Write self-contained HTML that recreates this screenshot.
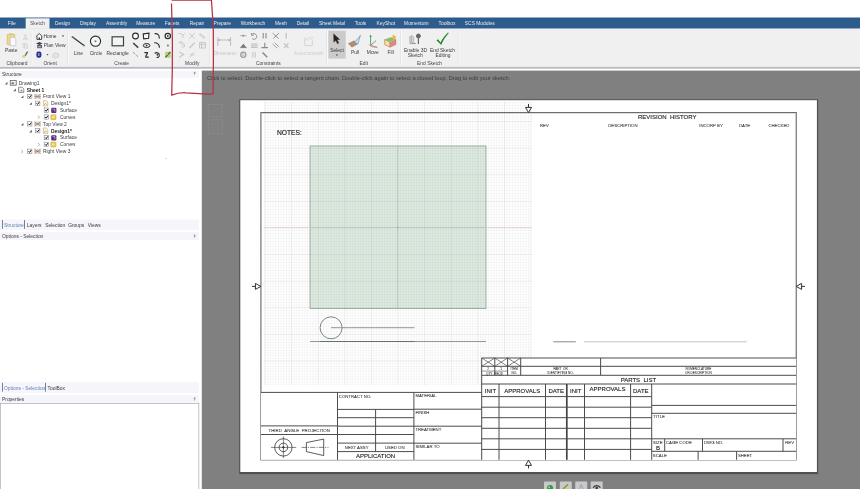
<!DOCTYPE html>
<html><head><meta charset="utf-8">
<style>
html,body{margin:0;padding:0;background:#fff;overflow:hidden}
body{width:860px;height:489px;position:relative;font-family:"Liberation Sans",sans-serif}
svg{position:absolute;left:-6px;top:-6px;display:block;filter:blur(.35px)}
text{font-family:"Liberation Sans",sans-serif}
.ui{font-size:4.9px;fill:#3a3a3a}
.tab{font-size:4.9px;fill:#e8eef5}
.lbl{font-size:4.9px;fill:#444}
.dis{font-size:4.9px;fill:#b4b4b4}
.dr{font-size:4.3px;fill:#333;stroke:#333;stroke-width:.05}
.drm{font-size:6px;fill:#222;stroke:#222;stroke-width:.12}
.ln{stroke:#4c4c4c;stroke-width:1;fill:none}
</style></head><body>
<svg width="872" height="501" viewBox="-6 -6 872 501">
<defs>
<pattern id="gmin" width="2.66" height="2.66" patternUnits="userSpaceOnUse" x="397.6" y="227.5">
<path d="M0 0H2.66M0 0V2.66" stroke="#101040" stroke-opacity=".11" stroke-width=".55" fill="none"/>
</pattern>
<pattern id="gmaj" width="26.6" height="26.6" patternUnits="userSpaceOnUse" x="397.6" y="227.5">
<path d="M0 0H26.6M0 0V26.6" stroke="#101040" stroke-opacity=".15" stroke-width=".7" fill="none"/>
</pattern>
<clipPath id="sheetclip"><rect x="240" y="101" width="577" height="371"/></clipPath>
</defs>

<!-- ===== base chrome ===== -->
<rect x="-6" y="-6" width="872" height="501" fill="#fff"/>
<rect x="-6" y="17.5" width="872" height="11.2" fill="#2c5b8c"/>
<rect x="-6" y="28.7" width="872" height="38.5" fill="#f0f0f0"/>
<rect x="-6" y="66.900" width="872" height="1.800" fill="#b6bcc4"/>
<!-- viewport -->
<rect x="201.800" y="70.600" width="664.200" height="424.400" fill="#808080"/>

<!-- tabs -->
<rect x="25.7" y="18.3" width="23.8" height="10.6" fill="#f0f0f0"/>
<g class="tab" text-anchor="middle">
<text x="11.8" y="24.9">File</text>
<text x="37.6" y="24.9" style="fill:#555">Sketch</text>
<text x="62.7" y="24.9">Design</text>
<text x="88" y="24.9">Display</text>
<text x="116.5" y="24.9">Assembly</text>
<text x="145.7" y="24.9">Measure</text>
<text x="172.2" y="24.9">Facets</text>
<text x="197" y="24.9">Repair</text>
<text x="222.2" y="24.9">Prepare</text>
<text x="253" y="24.9">Workbench</text>
<text x="281" y="24.9">Mesh</text>
<text x="303" y="24.9">Detail</text>
<text x="332" y="24.9">Sheet Metal</text>
<text x="360.5" y="24.9">Tools</text>
<text x="385.8" y="24.9">KeyShot</text>
<text x="416.3" y="24.9">Momentum</text>
<text x="447" y="24.9">Toolbox</text>
<text x="479.8" y="24.9">SCS Modules</text>
</g>

<!-- ribbon -->
<g stroke="#e0e0e0" stroke-width=".8">
<path d="M31.2 31V65M67.5 31V65M209.5 31V65M326.7 31V65M400.5 31V65M458.3 31V65"/>
</g>
<g stroke="#fbfbfb" stroke-width=".8">
<path d="M32 31V65M68.3 31V65M210.3 31V65M327.5 31V65M401.3 31V65M459.1 31V65"/>
</g>
<!-- group labels -->
<g class="lbl" text-anchor="middle">
<text x="17" y="64.9">Clipboard</text>
<text x="50.2" y="64.9">Orient</text>
<text x="121.6" y="64.9">Create</text>
<text x="192.3" y="64.9">Modify</text>
<text x="268.4" y="64.9">Constraints</text>
<text x="363.8" y="64.9">Edit</text>
<text x="429.6" y="64.9">End Sketch</text>
</g>
<!-- clipboard -->
<g>
<rect x="7.2" y="34.2" width="7.6" height="10.6" rx="1" fill="#ecd98f" stroke="#cdb25a" stroke-width=".6"/>
<rect x="9.3" y="33.2" width="3.4" height="2" rx=".6" fill="#d9c77f"/>
<path d="M10.2 37.5h4l1.6 1.6v6.6h-5.6z" fill="#fbfbff" stroke="#b9b4cf" stroke-width=".6"/>
<text class="ui" x="11.2" y="51.9" text-anchor="middle">Paste</text>
<g stroke="#d4d4d4" stroke-width=".9" fill="none">
<path d="M24 34.2l2.2 4.6M26.6 34.2l-2.2 4.6"/><circle cx="24" cy="39" r=".8"/><circle cx="26.7" cy="39" r=".8"/>
<rect x="23" y="43.6" width="3" height="3.6"/><rect x="24.6" y="44.8" width="3" height="3.4" fill="#ececec"/>
</g>
<path d="M27.6 51.6l-2.6 4.2" stroke="#6b6446" stroke-width="1.3"/>
<path d="M22.6 55l2.6 .6l-.6 2.4l-2.6 -.8z" fill="#e1cf7c"/>
</g>
<!-- orient -->
<g>
<path d="M36 36.6l3.2-3l3.2 3M37 36.4v3h4.6v-3" fill="#fff" stroke="#333" stroke-width=".9"/>
<rect x="38.6" y="37.4" width="1.3" height="2" fill="#333"/>
<text class="ui" x="43.4" y="37.8">Home</text>
<path d="M61.9 35.6h2.2l-1.1 1.4z" fill="#333"/>
<path d="M36 43.6l3.3-1.5l3.3 1.5l-3.3 1.3z" fill="#3c4048"/>
<rect x="37.2" y="45" width="4.8" height="3.2" fill="#555b66"/><rect x="38.2" y="46" width="2.8" height="1.4" fill="#aab"/>
<text class="ui" x="43.8" y="47.3">Plan View</text>
<rect x="36.4" y="51.4" width="5" height="6.4" rx="2" fill="#2a2f8f"/><rect x="38.2" y="53" width="1.2" height="3" fill="#9fb0ff"/>
<path d="M46.4 54.2h2.2l-1.1 1.4z" fill="#333"/>
<path d="M52.4 55l3-2.4l3.4 1.2v3l-3.4 1.2l-3-1z" fill="#e3e3e3" stroke="#c6c6c6" stroke-width=".6"/>
</g>
<!-- create big -->
<g>
<path d="M72.5 36.9L84 45.5" stroke="#2f3236" stroke-width="1.2"/>
<circle cx="72.5" cy="36.9" r="1" fill="#4d8c84"/><circle cx="84" cy="45.5" r="1" fill="#4d8c84"/>
<text class="ui" x="78.4" y="54.8" text-anchor="middle">Line</text>
<circle cx="95.5" cy="41.2" r="5.1" fill="#f6f6f6" stroke="#26292c" stroke-width="1.1"/>
<circle cx="95.5" cy="41.2" r="1" fill="#4d8c84"/><circle cx="98.3" cy="36.6" r=".9" fill="#4d8c84"/>
<text class="ui" x="96" y="54.8" text-anchor="middle">Circle</text>
<rect x="112.1" y="36.8" width="11.4" height="9" fill="#f4f4f4" stroke="#3a4444" stroke-width="1.2"/>
<text class="ui" x="117.6" y="54.8" text-anchor="middle">Rectangle</text>
</g>
<!-- create small -->
<g fill="none" stroke="#2b2b2b" stroke-width="1">
<circle cx="135.5" cy="36" r="2.9" fill="#f8f8f8" stroke-width="1.1"/>
<path d="M143.2 33.9l5.8-.8l-.4 5.2l-4.9.5z" fill="#f8f8f8" stroke-width="1.1"/>
<path d="M154.6 33.6c3.6-.2 5 1.6 4.6 5" stroke-width="1.1"/>
<circle cx="167.8" cy="36" r="2.7" stroke-width="1.2" fill="#f4f4f4"/><circle cx="167.8" cy="36" r=".5" fill="#2b2b2b"/>
<path d="M133.2 43l5 4.6" stroke="#444" stroke-width="1.6"/>
<ellipse cx="146.6" cy="45.5" rx="3.3" ry="2" stroke-width="1"/><circle cx="146.6" cy="45.5" r=".5" fill="#2b2b2b"/>
<path d="M154.2 42.8c3.4 0 5.2 1.8 5.2 5" stroke-width="1.1"/>
<circle cx="167.9" cy="45.4" r="1" fill="#4f8a62" stroke="none"/>
<path d="M133 52.2l5.4 4.8" stroke="#666" stroke-width=".9" stroke-dasharray="1 .9"/>
<path d="M144.4 52.6h3c.6 2-2.6 2.8-1.6 4.6h3" stroke-width="1.2"/>
<path d="M154.6 53.4c2.4-1.8 5.4 0 4.6 2.6c-.6 1.6-2 1.600-2.600 1.2" stroke-width="1.1"/><circle cx="157.300" cy="54.8" r=".5" fill="#2b2b2b"/>
<rect x="165.200" y="51.8" width="5.400" height="5.800" fill="#b9c96a" stroke="none"/><path d="M165.400 57.400l5-5.400" stroke="#3f7a3a" stroke-width="1.300"/><path d="M165.600 52.400l4.800 5" stroke="#d6dc8c" stroke-width=".8"/>
</g>
<!-- modify (disabled) -->
<g fill="none" stroke="#c4c4c4" stroke-width=".9">
<path d="M178.600 33.400c3 0 4.400 1.200 4.400 4.600M182.800 35.200l2-1.800"/>
<path d="M189.400 33.400l5.400 5M194.800 33.200l-5.600 5.400"/>
<path d="M200.200 33.600l4.800 3.800l-.8 1l-4.800-3.800z"/>
<path d="M178.400 42.400c3 .4 4.600 2.200 4.600 5.400M180 41.600c3 .4 4.600 2.200 4.600 5.400"/>
<path d="M189.400 48l5.400-5.400" stroke-width="1.300"/>
<rect x="199.600" y="42.600" width="5.800" height="5.400"/><path d="M201.600 42.600v5.400M199.600 44.600h5.800"/>
<path d="M179.600 52l4 2.400l-4.400 2.800" stroke-width="1.100"/>
<path d="M189.600 57.200l5-5.200M190 54.200l4.400 1"/>
</g>
<!-- dimension -->
<g fill="none" stroke="#b9b9b9" stroke-width=".9">
<path d="M217.800 37v8.800M230.600 37v8.800M217.800 40h12.800"/>
<path d="M217.800 40l2-1.200v2.400zM230.600 40l-2-1.200v2.400z" fill="#9bb0c8" stroke="none"/>
</g>
<text class="dis" x="225.300" y="54.900" text-anchor="middle" style="fill:#c6c6c6">Dimension</text>
<!-- constraints -->
<g fill="none" stroke="#a9a9a9" stroke-width=".9">
<path d="M240.200 35.700h6.400"/><circle cx="243.300" cy="35.700" r=".9" fill="#888" stroke="none"/>
<path d="M251.600 34c3.600-1.600 6.400 1.600 4.600 4.200c-1.200 1.400-3 1.400-4 .4M251.200 33.200l.6 2.400l2.200-.8" stroke="#8a8a8a"/>
<path d="M263.200 33v5.600M266 33v5.600" stroke="#8a8a8a" stroke-width="1.100"/>
<path d="M272.600 33.200l6 5.400M279 33l-5.800 5.600" stroke="#8a8a8a"/>
<path d="M286.200 33v5.400" stroke="#c4c4c4" stroke-width="1.400"/>
<path d="M240.600 47.200h5.600l-2.800-3.400z" fill="#777" stroke="none"/><path d="M240.200 47.600h6.400" stroke="#777"/>
<path d="M251 44h6.600M251 45.800h6.600M251 47.400h6.600" stroke="#b4b4b4"/>
<path d="M261.400 47.600h6.600M264.800 42.800v4.800" stroke="#8a8a8a" stroke-width="1.100"/>
<path d="M272.600 44l4.600 4.200M274.600 42.800l4.600 4.200" stroke="#9a9a9a"/>
<path d="M284 43.400l4.400 4.400M288.400 43.400l-4.400 4.400" stroke="#c0c0c0" stroke-width="1.200"/>
<circle cx="243.300" cy="54.700" r="2.600" stroke="#9a9a9a" stroke-width="1.200"/><circle cx="243.300" cy="54.700" r="1" stroke="#b4b4b4"/>
<path d="M252.800 52v5.800M255.200 52v5.800" stroke="#c0c0c0"/>
<path d="M262.600 52.400l4.600 4.800" stroke="#8a8a8a" stroke-width="1.500"/>
</g>
<!-- autoconstrain -->
<g fill="none" stroke="#d2d2d2" stroke-width=".9">
<path d="M304.800 45.600v-7.800l2.800 2.400l2-3.200l2.800 3.200v5.400z"/><path d="M311.400 36.600l2 1.600"/>
</g>
<text class="dis" x="308.600" y="55" text-anchor="middle" style="fill:#cdcdcd">Autoconstrain</text>
<!-- select -->
<rect x="328.300" y="30.700" width="17.400" height="27.900" fill="#cbcbcb"/>
<path d="M333.600 33.800l.2 8.400l2-1.800l1.600 3.400l1.400-.7l-1.600-3.300l2.600-.2z" fill="#2a2018" stroke="#4a3a2c" stroke-width=".4"/>
<text class="ui" x="337.100" y="52" text-anchor="middle">Select</text>
<path d="M335.800 54.600h2.200l-1.100 1.300z" fill="#333"/>
<!-- pull -->
<path d="M348.400 43.600l5.800-2.800l3.200 3.400l-5.600 3z" fill="#b98a68" stroke="#8a6a52" stroke-width=".4"/>
<path d="M354.400 42.600l6-7.200l-2.400 8.400z" fill="#cfe2f2" stroke="#5d86a8" stroke-width=".6"/>
<text class="ui" x="355" y="54.400" text-anchor="middle">Pull</text>
<!-- move -->
<g fill="none" stroke-width=".9">
<path d="M370.600 45.400v-10" stroke="#4c9a78"/><path d="M369.400 37l1.200-2.400l1.200 2.400z" fill="#4c9a78" stroke="none"/>
<path d="M370.600 45.400l5.400-4.800" stroke="#5aa36a"/>
<path d="M370.600 45.400l6.600 2.200" stroke="#b46a6a"/>
<path d="M368.800 44.400c2.400 3 6 3.400 8.400 2" stroke="#c08a8a" stroke-width=".6"/>
</g>
<text class="ui" x="372.800" y="54.400" text-anchor="middle">Move</text>
<!-- fill -->
<path d="M384.600 39.600l6-2.400l5.400 2l-6 2.600z" fill="#7cc46a"/>
<path d="M384.600 39.600v5l5.400 2.600v-5z" fill="#f1e39a" stroke="#c96a5a" stroke-width=".6"/>
<path d="M390 42.200l6-2.600v5l-6 2.600z" fill="#d88a84" stroke="#c96a5a" stroke-width=".4"/>
<path d="M393.600 34.600l1 1.600l1.800-.4l-1 1.600l1 1.400l-1.800-.2l-1 1.600l-.6-1.800l-1.800-.4l1.600-1l-.2-1.800z" fill="#f2b33a"/>
<text class="ui" x="390.600" y="54.400" text-anchor="middle">Fill</text>
<!-- enable 3d sketch -->
<g fill="none" stroke="#8a8a8a" stroke-width=".8">
<path d="M410 36v7.600h5.600M411.800 35v7.400l4 1.200" /><path d="M413.600 36.400v5.400" stroke="#aaa"/>
<circle cx="418.400" cy="36" r="2" fill="#6a6a6a" stroke="#5a5a5a"/><path d="M418.400 38v6" stroke="#5a5a5a" stroke-width="1.100"/>
</g>
<text class="ui" x="415.500" y="51.700" text-anchor="middle">Enable 3D</text>
<text class="ui" x="415.200" y="57.300" text-anchor="middle">Sketch</text>
<!-- end sketch -->
<path d="M436.400 40.200l1.600-1l2.600 3.200c2-3.800 4.400-7 7.400-9.800l.8.400c-3 3.400-5.800 7.600-7.600 12z" fill="#1f8a2c"/>
<text class="ui" x="442.500" y="51.700" text-anchor="middle">End Sketch</text>
<text class="ui" x="443" y="57.300" text-anchor="middle">Editing</text>

<!-- left panel -->
<rect x="0" y="70.800" width="199" height="7" fill="#f5f5fb"/>
<text class="ui" x="2" y="75.600">Structure</text>
<!-- tree -->
<g class="ui">
<g fill="#555"><path d="M5 84.400l2.400-2.600v2.600zM13.400 91.200l2.400-2.600v2.600zM21 98l2.400-2.600v2.600zM29.400 104.800l2.400-2.600v2.600zM21 125.600l2.400-2.600v2.600zM29.400 132.400l2.400-2.600v2.600z"/></g>
<g fill="none" stroke="#777" stroke-width=".6"><path d="M38 115.600l1.600 1.600l-1.600 1.600M38 143l1.600 1.600l-1.600 1.600M21.400 150l1.600 1.600l-1.600 1.600"/></g>
<!-- row icons -->
<rect x="10.200" y="80.400" width="6" height="4.800" fill="#f2f2f2" stroke="#555" stroke-width=".7"/><rect x="11.600" y="82.400" width="2.200" height="1.800" fill="#666"/>
<text x="18.800" y="84.700">Drawing1</text>
<path d="M18.600 87.200h3.600l1.600 1.600v3.600h-5.200z" fill="#f4f4f4" stroke="#666" stroke-width=".7"/><path d="M20 91.200l1.400-1.600l1.400 1.600z" fill="#888"/>
<text x="26.800" y="91.500" style="font-weight:bold;fill:#222">Sheet 1</text>
<!-- checkbox + view rows -->
<g id="cb1"><rect x="27.600" y="94.300" width="4.300" height="4.300" fill="#fff" stroke="#8a8a94" stroke-width=".6"/><path d="M28.500 96.400l1.100 1.200l1.700-2.400" fill="none" stroke="#111" stroke-width="1"/></g>
<g id="vi1"><rect x="34.200" y="94" width="6.600" height="5" fill="#e9d9cf"/><path d="M34.400 94.200l6.200 4.600M40.600 94.200l-6.200 4.600M34.200 96.500h6.600" stroke="#8a7466" stroke-width=".6"/></g>
<text x="43" y="98.300">Front View 1</text>
<use href="#cb1" x="8" y="6.850"/>
<g id="de1"><path d="M43.400 100.600h3l1.400 1.400v4h-4.400z" fill="#fdf6e6" stroke="#b9a27a" stroke-width=".6"/><path d="M44.200 105.200l1.200-1.800l1.400 1.200" fill="none" stroke="#c48a3a" stroke-width=".7"/></g>
<text x="51" y="105.200">Design1*</text>
<use href="#cb1" x="16.600" y="13.700"/>
<g id="su1"><rect x="51.200" y="107.800" width="5.200" height="5.200" rx="1" fill="#5a2f7a"/><path d="M52.600 109.200h2.200v2.400" stroke="#d9c2ea" stroke-width=".7" fill="none"/></g>
<text x="60" y="112">Surface</text>
<use href="#cb1" x="16.600" y="20.550"/>
<g id="cu1"><rect x="50.800" y="114.700" width="5.200" height="5" rx=".8" fill="#e9c85a" stroke="#c9a83a" stroke-width=".5"/><rect x="52.200" y="116" width="2.200" height="2" fill="#f6e7a6"/></g>
<text x="60" y="118.900">Curves</text>
<use href="#cb1" x="0" y="27.400"/><use href="#vi1" x="0" y="27.400"/>
<text x="43" y="125.700">Top View 2</text>
<use href="#cb1" x="8" y="34.250"/><use href="#de1" x="0" y="27.400"/>
<text x="51" y="132.600" style="font-weight:bold;fill:#222">Design1*</text>
<use href="#cb1" x="16.600" y="41.100"/><use href="#su1" x="0" y="27.400"/>
<text x="60" y="139.400">Surface</text>
<use href="#cb1" x="16.600" y="47.950"/><use href="#cu1" x="0" y="27.400"/>
<text x="60" y="146.300" style="font-style:italic">Curves</text>
<use href="#cb1" x="0" y="54.800"/><use href="#vi1" x="0" y="54.800"/>
<text x="43" y="153.100">Right View 3</text>
</g>
<rect x="165.600" y="158" width=".8" height=".8" fill="#999"/>
<!-- tabs row -->
<rect x="0" y="219.600" width="199" height="10.400" fill="#f5f5fb"/>
<path d="M2.500 220v8.800M24.500 220v8.800" stroke="#3a4a66" stroke-width=".7"/>
<g class="ui">
<text x="4" y="226.700" style="fill:#5d85b4">Structure</text>
<text x="26.800" y="226.700">Layers</text>
<text x="45.200" y="226.700">Selection</text>
<text x="68.200" y="226.700">Groups</text>
<text x="87.800" y="226.700">Views</text>
</g>
<rect x="0" y="232.200" width="199" height="7.800" fill="#f5f5fb"/>
<text class="ui" x="2" y="238">Options - Selection</text>
<!-- bottom tabs -->
<rect x="0" y="382" width="199" height="11" fill="#f5f5fb"/>
<path d="M2.500 382.800v8.800M45.500 382.800v8.800" stroke="#3a4a66" stroke-width=".7"/>
<g class="ui">
<text x="4" y="389.500" style="fill:#5d85b4">Options - Selection</text>
<text x="47.500" y="389.500">ToolBox</text>
</g>
<rect x="0" y="395.200" width="199" height="8" fill="#f5f5fb"/>
<text class="ui" x="2" y="401">Properties</text>
<rect x=".4" y="403.400" width="198.400" height="90" fill="#fff" stroke="#b4b4bc" stroke-width=".8"/>
<g fill="#9a9aa6"><rect x="193.800" y="71.800" width="1.600" height="2.200"/><rect x="194.400" y="74" width=".5" height="1.400"/>
<rect x="193.800" y="234.600" width="1.600" height="2.200"/><rect x="194.400" y="236.800" width=".5" height="1.400"/>
<rect x="193.800" y="397.400" width="1.600" height="2.200"/><rect x="194.400" y="399.600" width=".5" height="1.400"/></g>

<!-- hint text -->
<text x="207.100" y="79.900" style="font-size:5.660px;fill:#3c3c3c">Click to select. Double-click to select a tangent chain. Double-click again to select a closed loop. Drag to edit your sketch.</text>
<!-- faint viewport mini buttons -->
<g fill="none" stroke="#8b8b8b" stroke-width=".7"><rect x="208.200" y="104.400" width="14" height="12.600"/><rect x="208.200" y="119.800" width="14" height="14"/>
<path d="M212 113l6-5M211.600 124h6.600v6.600h-6.600z" stroke="#898989"/></g>
<!-- sheet -->
<rect x="239.200" y="99.300" width="579" height="374.800" fill="#505050"/>
<rect x="240.300" y="100.200" width="576.600" height="371.800" fill="#fff"/>
<!-- green face -->
<rect x="310" y="146" width="176" height="162.400" fill="#ddeadf" stroke="#8fa293" stroke-width=".8"/>
<g clip-path="url(#sheetclip)">
<rect x="263.600" y="100" width="268" height="285.200" fill="url(#gmin)"/>
<rect x="263.600" y="100" width="268" height="285.200" fill="url(#gmaj)"/>
</g>
<g clip-path="url(#greenclip)"></g>
<path d="M263.600 227.500H531.600" stroke="#e3cfd6" stroke-width=".8"/>

<path d="M310 227.500H486" stroke="#b4c2b7" stroke-width=".7"/>
<path d="M397.600 146V308.400" stroke="#b4c2b7" stroke-width=".7"/><circle cx="397.600" cy="227.500" r=".8" fill="#9aa89d"/>
<!-- sketch curves -->
<circle cx="331.100" cy="327.800" r="11" fill="none" stroke="#6f7a72" stroke-width=".9"/>
<path d="M331 327.700H414.600M310.200 341.500H486" stroke="#8f9a92" stroke-width="1"/>
<path d="M320 341.500H414.600" stroke="#66756a" stroke-width="1"/>
<path d="M553.400 341.800H575.800" stroke="#7d8f80" stroke-width="1"/>
<path d="M584 341.800H746.800" stroke="#bdbdbd" stroke-width=".9"/>
<!-- frame -->
<path d="M260.400 112.700H796.800" class="ln"/><path d="M260.400 459.900H796.800" class="ln" style="stroke:#5c5c5c"/>
<path d="M260.900 112.700V459.900M796.300 112.700V459.900" class="ln" style="stroke:#858585;stroke-width:1.400"/>
<!-- centre marks -->
<g class="ln" stroke-width=".8" style="stroke:#333">
<path d="M528.500 104v3.400M525.500 107.400h6l-3 5.200z" fill="#fff"/>
<path d="M528.500 468.400v-3M525.500 465.400h6l-3-5.200z" fill="#fff"/>
<path d="M252 286.400h3.400M255.400 283.400v6l5.400-3z" fill="#fff"/>
<path d="M805 286.400h-3.400M801.600 283.400v6l-5.400-3z" fill="#fff"/>
</g>
<!-- revision block text -->
<text class="drm" x="638" y="119">REVISION&#160;&#160;HISTORY</text>
<g class="dr">
<text x="540" y="127">REV</text>
<text x="608.200" y="127">DESCRIPTION</text>
<text x="699.200" y="127">INCORP BY</text>
<text x="739" y="127">DATE</text>
<text x="768.400" y="127">CHECKED</text>
</g>
<text x="277" y="134.600" style="font-size:6.700px;fill:#1c1c1c;stroke:#1c1c1c;stroke-width:.15">NOTES:</text>
<!-- title block -->
<rect x="481.700" y="358" width="314.500" height="102" fill="#fff"/>
<rect x="261" y="392.300" width="221" height="67.500" fill="#fff"/>
<g class="ln">
<path d="M261 392.400H481.700"/>
<path d="M337.500 392.400V459.800M413.900 392.400V459.800"/>
<path d="M261 425.900H337.500M261 434.500H337.500"/>
<path d="M337.500 409.400H413.900M337.500 417.700H413.900M337.500 426.200H413.900M337.500 434.500H413.900M337.500 443.100H413.900M337.500 451.600H413.900"/>
<path d="M375.600 409.400V451.600"/>
<path d="M413.900 409.200H481.700M413.900 426.200H481.700M413.900 443.200H481.700"/>
<!-- parts list -->
<path d="M481.700 358H796.200M481.700 366.300H796.200M481.700 375.300H796.200M481.700 384H796.200"/>
<path d="M481.700 371.100H507.600" stroke-width=".6"/>
<path d="M481.700 358V459.800"/>
<path d="M494.800 358V375.300M507.600 358V375.300M520.700 358V375.300M600.600 358V375.300"/>
<path d="M481.700 358l13.100 8.300M494.800 358l-13.100 8.300M494.800 358l12.800 8.300M507.600 358l-12.800 8.300M507.600 358l13.100 8.300M520.700 358l-13.100 8.300" stroke-width=".7"/>
<!-- approvals -->
<path d="M499 384V459.800M545.500 384V459.800M584.500 384V459.800M630.600 384V459.800M651.700 384V459.800"/>
<path d="M566.800 384V459.800" stroke-width="1.700" style="stroke:#444"/>
<path d="M481.700 396.600H651.700M481.700 407.200H651.700M481.700 417.700H651.700M481.700 428.300H651.700M481.700 438.800H651.700M481.700 449.400H651.700"/>
<!-- right block -->
<path d="M651.700 405.400H796.200M651.700 413.300H796.200M651.700 438.800H796.200M651.700 451.300H796.200"/>
<path d="M664.700 438.800V451.300M702.500 438.800V451.300M783 438.800V451.300M698.100 451.300V459.800M736.600 451.300V459.800"/>
</g>
<!-- projection symbol -->
<g fill="none" stroke="#333" stroke-width=".8">
<circle cx="283.400" cy="447.400" r="8.700"/><circle cx="283.400" cy="447.400" r="4.300"/><circle cx="283.400" cy="447.400" r=".8" fill="#333"/>
<path d="M271 447.400H296.200M283.400 436.400V458" stroke-width=".6"/>
<path d="M306.400 442.600L323.700 439.100V455.600L306.400 451.600Z"/>
<path d="M301.600 447.400H328.500" stroke-width=".6" stroke-dasharray="5 1.200 1.200 1.200"/>
</g>
<!-- title block text -->
<g class="dr">
<text x="299.200" y="431.900" text-anchor="middle" style="font-size:4.400px">THIRD&#160;&#160;ANGLE&#160;&#160;PROJECTION</text>
<text x="338.800" y="397.600">CONTRACT NO.</text>
<text x="356.700" y="449" text-anchor="middle">NEXT ASSY</text>
<text x="394.700" y="449" text-anchor="middle">USED ON</text>
<text x="415.400" y="397.300">MATERIAL</text>
<text x="415.400" y="414">FINISH</text>
<text x="415.400" y="430.900">TREATMENT</text>
<text x="415.400" y="447.800">SIMILAR TO</text>
<text x="653.200" y="418.200">TITLE</text>
<text x="653" y="443.600">SIZE</text>
<text x="666" y="443.600">CAGE CODE</text>
<text x="704" y="443.600">DWG NO.</text>
<text x="785.200" y="443.600">REV</text>
<text x="652.800" y="457.300">SCALE</text>
<text x="737.900" y="457.300">SHEET</text>
</g>
<g class="dr" style="font-size:3.100px" text-anchor="middle">
<text x="488.200" y="370.300">2</text><text x="501.200" y="370.300">1</text>
<text x="494.600" y="374.500">QTY&#160;&#160;REQD</text>
<text x="514.200" y="370.300">ITEM</text><text x="514.200" y="374.300">NO.</text>
<text x="560.600" y="370.300">PART&#160;&#160;OR</text><text x="560.600" y="374.300">IDENTIFYING NO.</text>
<text x="698.400" y="370.300">NOMENCLATURE</text><text x="698.400" y="374.300">OR DESCRIPTION</text>
</g>
<g class="drm" text-anchor="middle">
<text x="375.600" y="458.100">APPLICATION</text>
<text x="638.400" y="381.600">PARTS&#160;&#160;LIST</text>
<text x="490.400" y="392.500">INIT</text>
<text x="522.200" y="392.500">APPROVALS</text>
<text x="556.200" y="392.500">DATE</text>
<text x="575.700" y="392.500">INIT</text>
<text x="607.500" y="390.600">APPROVALS</text>
<text x="640.800" y="392.500">DATE</text>
<text x="658" y="449.800">B</text>
</g>


<!-- bottom mini toolbar -->
<g>
<rect x="544" y="481.600" width="12" height="12" rx="1" fill="#c9c9c9"/>
<rect x="559.800" y="481.600" width="12" height="12" rx="1" fill="#c9c9c9"/>
<rect x="575.200" y="481.600" width="12" height="12" rx="1" fill="#c9c9c9"/>
<rect x="590.700" y="481.600" width="12" height="12" rx="1" fill="#c9c9c9"/>
<circle cx="550" cy="488" r="3" fill="#2f9a44"/><circle cx="549.200" cy="487.200" r="1" fill="#8fd79a"/>
<path d="M563 489l5-4.600" stroke="#8a9a2a" stroke-width="1.500"/><path d="M565 489.400l3-2" stroke="#d6d84a" stroke-width="1"/>
<path d="M581.200 484.600l-2 4.800M581.200 484.600l2 4.800" stroke="#7f9cc0" stroke-width=".9" fill="none"/>
<path d="M593 487.600c2.400-2.600 5-2.600 7.400 0" stroke="#3a3a3a" stroke-width="1.200" fill="none"/><circle cx="596.700" cy="488" r="1.300" fill="#3a3a3a"/>
</g>

<!-- red annotation -->
<path d="M171.500 3.500L172.400 40L172.300 70L171.700 95.200C176 93.600 181 92.400 186 92.800C195 93.200 204 94.600 213 94L213.400 60L213.300 30L212.600 17L211.500 1L211.400 0.200L171.600 0.200" fill="none" stroke="#b9303e" stroke-width="1.250" stroke-linejoin="round"/>

</svg>
</body></html>
